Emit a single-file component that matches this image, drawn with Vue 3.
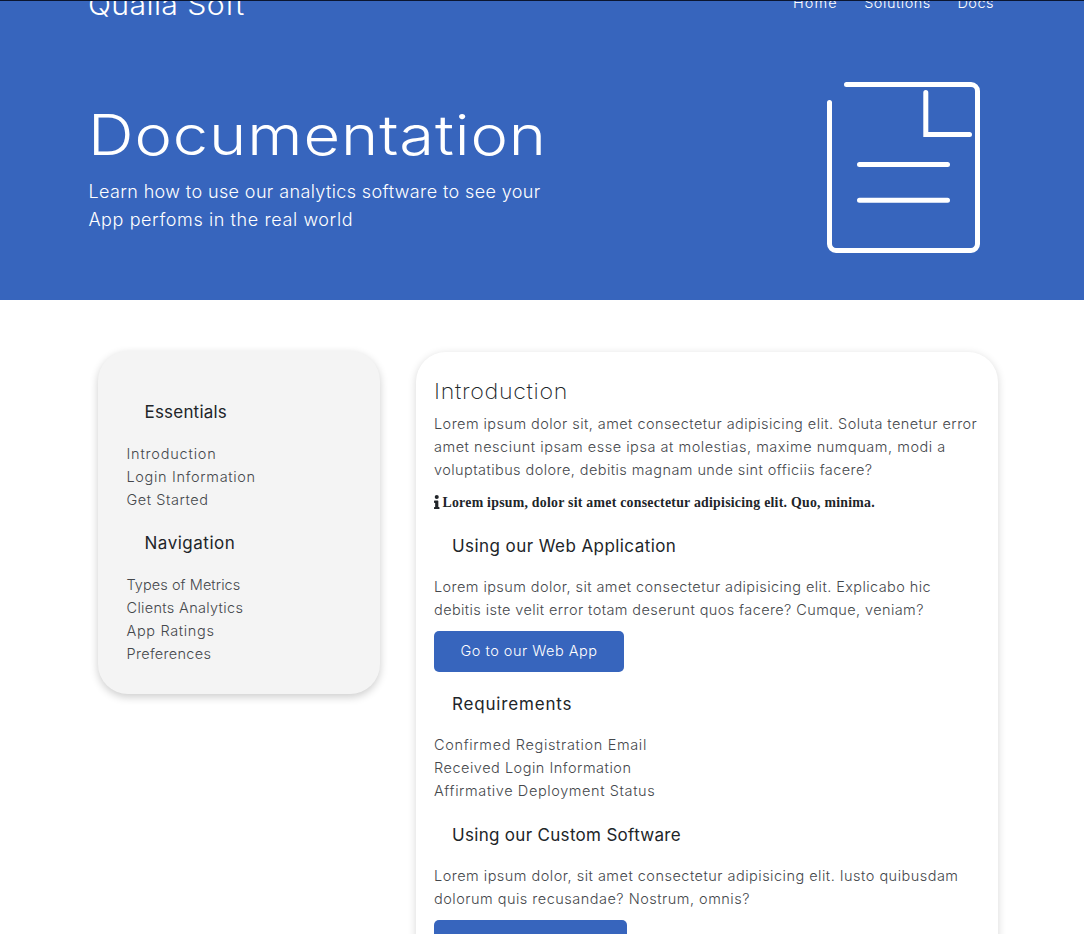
<script setup>
// Each text line carries its own tracking value in px.
const links = [
  { t: 'Home', s: 1.1 },
  { t: 'Solutions', s: 0.52 },
  { t: 'Docs', s: 0.5 }
]
const lead = [
  { t: 'Learn how to use our analytics software to see your', s: 0.38 },
  { t: 'App perfoms in the real world', s: 0.6 }
]
const menu = [
  {
    head: { t: 'Essentials', s: 0.2 },
    items: [
      { t: 'Introduction', s: 0.8 },
      { t: 'Login Information', s: 0.67 },
      { t: 'Get Started', s: 0.55 }
    ]
  },
  {
    head: { t: 'Navigation', s: 0.52 },
    items: [
      { t: 'Types of Metrics', s: 0.06 },
      { t: 'Clients Analytics', s: 0.32 },
      { t: 'App Ratings', s: 0.66 },
      { t: 'Preferences', s: 0.3 }
    ]
  }
]
const intro = [
  { t: 'Lorem ipsum dolor sit, amet consectetur adipisicing elit. Soluta tenetur error', s: 0.438 },
  { t: 'amet nesciunt ipsam esse ipsa at molestias, maxime numquam, modi a', s: 0.53 },
  { t: 'voluptatibus dolore, debitis magnam unde sint officiis facere?', s: 0.43 }
]
const webApp = [
  { t: 'Lorem ipsum dolor, sit amet consectetur adipisicing elit. Explicabo hic', s: 0.42 },
  { t: 'debitis iste velit error totam deserunt quos facere? Cumque, veniam?', s: 0.4 }
]
const requirements = [
  { t: 'Confirmed Registration Email', s: 0.65 },
  { t: 'Received Login Information', s: 0.51 },
  { t: 'Affirmative Deployment Status', s: 0.6 }
]
const custom = [
  { t: 'Lorem ipsum dolor, sit amet consectetur adipisicing elit. Iusto quibusdam', s: 0.483 },
  { t: 'dolorum quis recusandae? Nostrum, omnis?', s: 0.49 }
]
const track = (s) => ({ letterSpacing: s + 'px' })
</script>

<template>
  <div class="page">
    <header class="hero">
      <nav class="nav">
        <div class="brand">Qualia Soft</div>
        <ul class="links">
          <li v-for="l in links" :key="l.t"><a :style="track(l.s)">{{ l.t }}</a></li>
        </ul>
      </nav>
      <div class="hero-body">
        <div>
          <h1>Documentation</h1>
          <p class="lead">
            <span v-for="l in lead" :key="l.t" class="line" :style="track(l.s)">{{ l.t }}</span>
          </p>
        </div>
        <svg class="doc" viewBox="0 0 160 180" width="160" height="180" fill="none" stroke="#fff" stroke-width="5" stroke-linecap="round">
          <path d="M26.500 9.500H151a6.500 6.500 0 0 1 6.500 6.500V169a6.500 6.500 0 0 1-6.500 6.500H16a6.500 6.500 0 0 1-6.500-6.500V27.500" />
          <path d="M105.800 17.500V59.500H149.500" />
          <path d="M39.500 89.500H127.500M39.500 125.300H127.500" />
        </svg>
      </div>
    </header>
    <main class="content">
      <aside class="side">
        <section v-for="m in menu" :key="m.head.t">
          <h3 :style="track(m.head.s)">{{ m.head.t }}</h3>
          <ul>
            <li v-for="l in m.items" :key="l.t" :style="track(l.s)">{{ l.t }}</li>
          </ul>
        </section>
      </aside>
      <article class="card">
        <h2>Introduction</h2>
        <p>
          <span v-for="l in intro" :key="l.t" class="line" :style="track(l.s)">{{ l.t }}</span>
        </p>
        <p class="note">
          <svg viewBox="0 0 192 512" width="5.500" height="14.500" fill="#212529"><path d="M20 424h20V279H20c-11 0-20-9-20-20v-47c0-11 9-20 20-20h112c11 0 20 9 20 20v212h20c11 0 20 9 20 20v48c0 11-9 20-20 20H20c-11 0-20-9-20-20v-48c0-11 9-20 20-20zM96 0a72 72 0 1 0 0 144A72 72 0 0 0 96 0z" /></svg>
          <strong>Lorem ipsum, dolor sit amet consectetur adipisicing elit. Quo, minima.</strong>
        </p>
        <h3 :style="track(0.43)">Using our Web Application</h3>
        <p>
          <span v-for="l in webApp" :key="l.t" class="line" :style="track(l.s)">{{ l.t }}</span>
        </p>
        <a class="btn">Go to our Web App</a>
        <h3 :style="track(0.82)">Requirements</h3>
        <ul>
          <li v-for="l in requirements" :key="l.t" :style="track(l.s)">{{ l.t }}</li>
        </ul>
        <h3 :style="track(0.31)">Using our Custom Software</h3>
        <p>
          <span v-for="l in custom" :key="l.t" class="line" :style="track(l.s)">{{ l.t }}</span>
        </p>
        <a class="btn wide"></a>
      </article>
    </main>
  </div>
</template>

<style>
html, body { overflow: hidden; background: #fff; }
</style>
<style scoped>
.page { height: 934px; overflow: hidden; font-family: Inter, "Liberation Sans", sans-serif; font-weight: 300; color: #45484c; font-size: 14.5px; line-height: 23px; }
h1, h2, h3, p, ul { margin: 0; padding: 0; font-weight: 300; white-space: nowrap; }
ul { list-style: none; }
.line { display: block; }
.hero { box-sizing: border-box; height: 300px; background: #3765bd; border-top: 1px solid #0b1630; color: #fff; overflow: hidden; padding: 0 90px 0 88px; }
.nav { display: flex; justify-content: space-between; height: 46px; margin-top: -18px; }
.brand { font-size: 28px; line-height: 45px; letter-spacing: 0.350px; transform: scaleX(1.080); transform-origin: 0 50%; }
.links { display: flex; gap: 26.500px; line-height: 40px; }
.hero-body { display: flex; justify-content: space-between; padding: 45px 14px 0 0; }
h1 { font-size: 55.500px; line-height: 67px; margin-top: 27px; font-weight: 300; letter-spacing: 0.800px; transform: scaleX(1.140); transform-origin: 0 50%; width: 400px; }
.lead { font-size: 18px; line-height: 28px; margin-top: 10px; padding-left: 0.400px; }
.doc { margin-top: 0.600px; }
.content { display: flex; align-items: flex-start; gap: 36px; padding: 51px 86px 0 98px; }
.side { box-sizing: border-box; width: 282px; height: 343px; padding: 28.800px 28px 0 28.500px; border-radius: 30px; background: #f4f4f4; box-shadow: 0 3px 8px rgba(0,0,0,.2); }
.card { box-sizing: border-box; width: 582px; height: 640px; margin-top: 1px; padding: 23px 18px; border-radius: 30px; background: #fff; box-shadow: 0 2px 9px rgba(0,0,0,.16); }
h2 { font-size: 21.500px; line-height: 32px; margin-bottom: 4.500px; font-weight: 200; letter-spacing: 0.650px; color: #212529; transform: scaleX(1.080); transform-origin: 0 50%; }
h3 { font-size: 17px; line-height: 26.400px; margin: 19.500px 0 16.100px 18px; font-weight: 400; color: #212529; }
.side section:first-child h3 { margin-top: 19px; margin-bottom: 16.600px; }
.note { margin-top: 10.600px; display: flex; align-items: center; gap: 3px; line-height: 22px; font-family: "Liberation Serif", serif; color: #212529; }
.note strong { font-weight: 700; font-size: 13.800px; letter-spacing: 0.260px; padding-top: 0.600px; line-height: 21.400px; }
.btn { display: block; box-sizing: border-box; width: 190px; height: 41px; margin: 10.100px 0 -0.800px; padding-left: 26.500px; border-radius: 5px; background: #3765bd; color: #fff; line-height: 40px; letter-spacing: 0.500px; }
.btn.wide { width: 193px; }
</style>
